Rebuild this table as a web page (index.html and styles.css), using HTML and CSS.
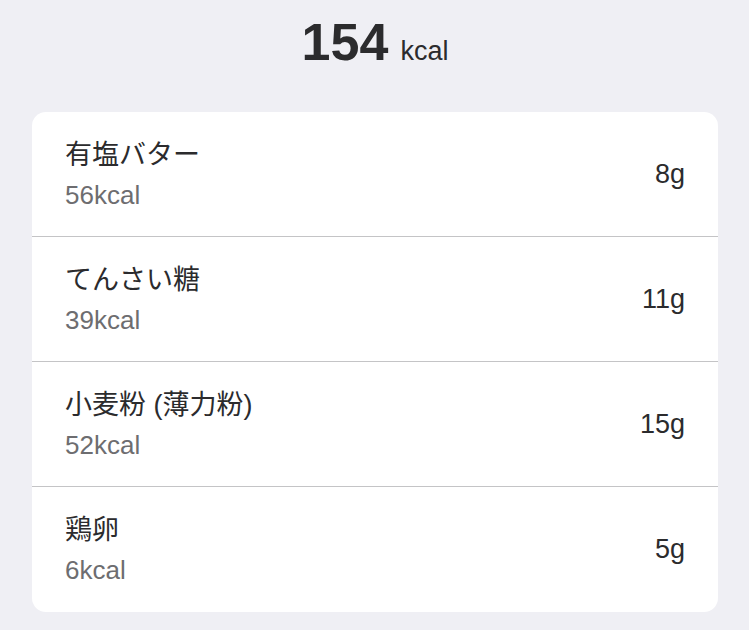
FILE: index.html
```html
<!DOCTYPE html>
<html lang="ja">
<head>
    <meta charset="UTF-8">
    <meta name="viewport" content="width=device-width, initial-scale=1.0">
    <title>Calories</title>
    <link rel="stylesheet" href="styles.css">
</head>
<body>

<div class="total">
    <span class="total-value">154</span>
    <span class="total-unit">kcal</span>
</div>

<div class="card">
    <div class="item">
        <div class="item-info">
            <div class="item-name">有塩バター</div>
            <div class="item-kcal">56kcal</div>
        </div>
        <div class="item-amount">8g</div>
    </div>
    <div class="item">
        <div class="item-info">
            <div class="item-name">てんさい糖</div>
            <div class="item-kcal">39kcal</div>
        </div>
        <div class="item-amount">11g</div>
    </div>
    <div class="item">
        <div class="item-info">
            <div class="item-name">小麦粉 (薄力粉)</div>
            <div class="item-kcal">52kcal</div>
        </div>
        <div class="item-amount">15g</div>
    </div>
    <div class="item">
        <div class="item-info">
            <div class="item-name">鶏卵</div>
            <div class="item-kcal">6kcal</div>
        </div>
        <div class="item-amount">5g</div>
    </div>
</div>

</body>
</html>
```

FILE: styles.css
```css
body {
    font-family: "Liberation Sans", "Noto Sans CJK JP", sans-serif;
    margin: 0;
    padding: 0 31px 0 32px;
    background-color: #efeff4;
    color: #2b2b2d;
}
.total {
    display: flex;
    justify-content: center;
    align-items: baseline;
    gap: 12px;
    height: 112px;
    box-sizing: border-box;
}
.total-value {
    font-size: 52px;
    font-weight: bold;
    line-height: 84px;
}
.total-unit {
    font-size: 27px;
}
.card {
    background-color: #fff;
    border-radius: 14px;
    overflow: hidden;
}
.item {
    display: flex;
    justify-content: space-between;
    align-items: center;
    height: 125px;
    padding: 0 33px;
    border-bottom: 1px solid #c4c4c6;
    box-sizing: border-box;
}
.item:last-child {
    border-bottom: none;
}
.item-info {
    display: flex;
    flex-direction: column;
    gap: 9px;
}
.item-name {
    font-size: 27px;
    line-height: 32px;
}
.item-kcal {
    font-size: 26px;
    line-height: 30px;
    color: #6d6d70;
}
.item-amount {
    font-size: 27px;
}
```
